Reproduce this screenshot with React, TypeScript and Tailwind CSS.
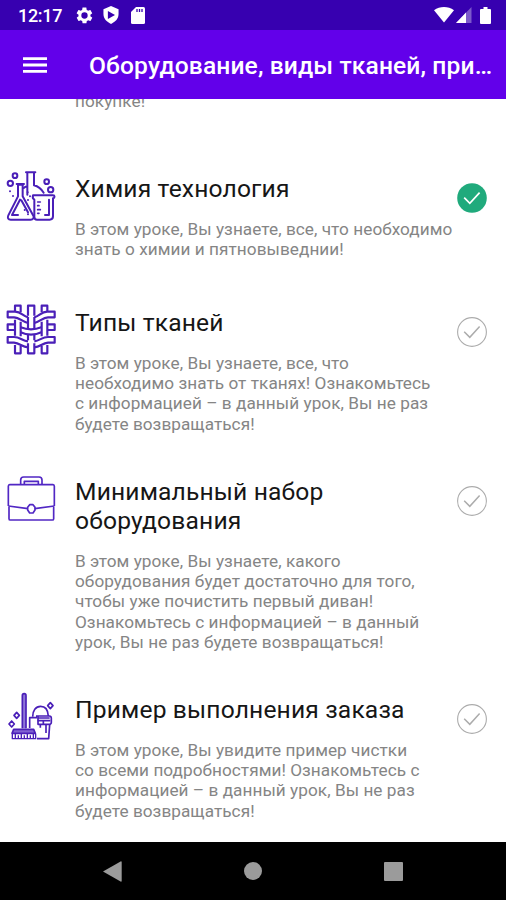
import type { ReactNode } from "react";

type Lesson = {
  title: string;
  text: string;
  done: boolean;
  icon: ReactNode;
  height: string;
};

/* ================= LESSON ICONS ================= */
function ChemistryIcon() {
  return (
    <svg
      viewBox="18 33 150 150"
      className="w-[50px] h-[50px] overflow-visible"
      fill="none"
      stroke="#4a1fb8"
      strokeWidth="6"
      strokeLinejoin="round"
      strokeLinecap="round"
    >
      <path d="M78 37h28M82 38v66M102 38v38c12 3 22 11 29 22M82 78c-4 1-8 3-11 6" />
      <path d="M50 72h22M54 73v36L25 166c-4 8 0 13 7 13h60c7 0 11-5 8-12L68 109V73" />
      <path d="M60 119l-24 46h18M64 121l20 36M54 74h14" />
      <path d="M99 106h60c6 0 6 8 0 9v54c0 6-4 10-10 10h-38c-5 0-8-4-8-9v-51c-4-2-6-6-4-13z" />
      <path d="M147 119v46h-12" />
      <path d="M113 126h8M113 137h4M113 149h8M113 160h4" strokeWidth="5" />
      <circle cx="31" cy="70" r="8" />
      <circle cx="45" cy="47" r="7" />
      <circle cx="140" cy="65" r="7" />
      <circle cx="152" cy="89" r="8" />
      <g fill="#4a1fb8" stroke="none">
        <circle cx="30" cy="94" r="3" />
        <circle cx="39" cy="108" r="3" />
        <circle cx="83" cy="97" r="3" />
        <circle cx="90" cy="109" r="3" />
        <circle cx="84" cy="120" r="3" />
        <circle cx="74" cy="150" r="3" />
        <circle cx="84" cy="163" r="3" />
      </g>
    </svg>
  );
}

function FabricIcon() {
  return (
    <svg
      viewBox="18 30 150 150"
      className="w-[50px] h-[50px] overflow-visible"
      fill="none"
      stroke="#4a1fb8"
      strokeWidth="6.5"
      strokeLinejoin="round"
    >
      <path d="M45 48V32h17v20M45 74v48M62 80v44M45 150v25h17v-22" />
      <path d="M84 62V32h19v30M84 66v36M103 66v36M84 119v17M103 119v17M84 145v30h19v-30" />
      <path d="M125 52V32h17v16M125 80v44M142 74v48M125 153v22h17v-25" />
      <path d="M45 50H23v17h19c16 0 26 14 42 17M45 50c18 0 23 12 39 17M142 50h22v17h-20c-16 0-25 14-41 17M142 50c-18 0-23 12-39 17" />
      <path d="M45 88H23v17h22M142 88h22v17h-22M62 97c10 4 16 6 31 6s21-2 31-6M62 112c10 5 16 7 31 7s21-2 31-7" />
      <path d="M42 126H23v17h19c18 1 24 14 42 14M42 126c18 0 25 11 42 13M144 126h20v17h-20c-18 1-23 14-41 14M144 126c-18 0-24 11-41 13" />
    </svg>
  );
}

function BriefcaseIcon() {
  return (
    <svg
      viewBox="18 27 150 150"
      className="w-[50px] h-[50px] overflow-visible"
      fill="none"
      stroke="#5127c4"
      strokeWidth="5"
      strokeLinejoin="round"
    >
      <path d="M62 58V45c0-6 3-9 9-9h46c6 0 9 3 9 9v13M73 58v-9h42v9" />
      <path d="M29 59h130c3 0 5 2 5 5v60H24V64c0-3 2-5 5-5z" stroke="none" />
      <path d="M25 123V64c0-3 1-5 4-5h130c3 0 4 2 4 5v59M27 125v36c0 3 1 4 4 4h126c3 0 4-1 4-4v-36" />
      <path d="M25 123l59 8M163 123l-59 8" />
      <path d="M89 119h10l6 8v8l-6 9H89l-6-9v-8z" />
    </svg>
  );
}

function CleaningIcon() {
  return (
    <svg
      viewBox="18 30 150 150"
      className="w-[50px] h-[50px] overflow-visible"
      fill="none"
      stroke="#4a1fb8"
      strokeWidth="5"
      strokeLinejoin="round"
    >
      <path d="M67 139V41c0-8 11-8 11 0v98" fill="#8f76d8" />
      <path d="M41 142h60l5 12H36z" fill="#8062d2" />
      <path d="M37 155v15h70v-15M46 156v13M55 160v10M64 156v13M73 160v10M82 156v13M91 160v10M100 156v13" strokeWidth="4" />
      <path d="M98 104c0-18 9-31 24-31 14 0 22 12 23 29" />
      <path d="M89 138v-31h22M108 102h40c5 0 6 3 6 7v12c0 4-2 6-6 6h-34v-25" />
      <path d="M113 108h36M113 116h38M121 127v10M130 116v10M138 127v26M149 128l-3 42h-35" />
      <path d="M50 91l8 9-8 9-8-9zM35 117l8 9-8 9-8-9zM151 62l8 9-8 9-8-9z" />
    </svg>
  );
}

function CheckMark({ done }: { done: boolean }) {
  return (
    <svg viewBox="0 0 30 30" className="w-[30px] h-[30px]" fill="none">
      <circle
        cx="15"
        cy="15"
        r={done ? 14.8 : 14.4}
        fill={done ? "#20aa7c" : "#ffffff"}
        stroke={done ? "none" : "#acacac"}
        strokeWidth="1.1"
      />
      <path
        d="M7.2 14.7l5.6 5.6L22.6 9.6"
        stroke={done ? "#ffffff" : "#acacac"}
        strokeWidth={done ? 1.7 : 1.5}
      />
    </svg>
  );
}

const lessons: Lesson[] = [
  {
    title: "Химия технология",
    text: "В этом уроке, Вы узнаете, все, что необходимо\nзнать о химии и пятновыведнии!",
    done: true,
    icon: <ChemistryIcon />,
    height: "h-[134px]",
  },
  {
    title: "Типы тканей",
    text: "В этом уроке, Вы узнаете, все, что\nнеобходимо знать от тканях! Ознакомьтесь\nс информацией – в данный урок, Вы не раз\nбудете возвращаться!",
    done: false,
    icon: <FabricIcon />,
    height: "h-[169px]",
  },
  {
    title: "Минимальный набор\nоборудования",
    text: "В этом уроке, Вы узнаете, какого\nоборудования будет достаточно для того,\nчтобы уже почистить первый диван!\nОзнакомьтесь с информацией – в данный\nурок, Вы не раз будете возвращаться!",
    done: false,
    icon: <BriefcaseIcon />,
    height: "h-[218px]",
  },
  {
    title: "Пример выполнения заказа",
    text: "В этом уроке, Вы увидите пример чистки\nсо всеми подробностями! Ознакомьтесь с\nинформацией – в данный урок, Вы не раз\nбудете возвращаться!",
    done: false,
    icon: <CleaningIcon />,
    height: "h-[149px]",
  },
];

function LessonRow({ lesson }: { lesson: Lesson }) {
  return (
    <div className={`flex shrink-0 items-start pl-[6px] pr-[19px] ${lesson.height}`}>
      <div className="w-[50px] shrink-0">{lesson.icon}</div>

      <div className="ml-[19px] flex-1 min-w-0 pt-[3px]">
        <h2 className="whitespace-pre text-[24.6px] leading-[29px] tracking-[0.16px] text-[#161616]">
          {lesson.title}
        </h2>
        <p className="mt-4 whitespace-pre text-[17.2px] leading-[20.2px] tracking-[0.05px] text-[#858585]">
          {lesson.text}
        </p>
      </div>

      <div className="mt-3 shrink-0">
        <CheckMark done={lesson.done} />
      </div>
    </div>
  );
}

export default function App() {
  return (
    <div className="flex h-[900px] w-[506px] flex-col overflow-hidden bg-white font-[Roboto,sans-serif]">
      {/* ================= STATUS BAR ================= */}
      <div className="flex h-[30px] shrink-0 items-center bg-[#3700b0] pl-[18px] pr-[15px] text-white">
        <span className="w-[57px] pt-[2px] text-[18px] leading-none font-medium tracking-[-0.3px]">12:17</span>

        <svg viewBox="0 0 24 24" className="w-[19px] h-[19px]" fill="currentColor">
          <path d="M19.4 13c.1-.3.1-.7.1-1s0-.7-.1-1l2.1-1.600c.2-.1.2-.4.1-.6l-2-3.500c-.1-.2-.4-.3-.6-.2l-2.500 1c-.5-.4-1.100-.7-1.700-1l-.4-2.600c0-.3-.2-.5-.5-.5h-4c-.3 0-.4.2-.5.4l-.4 2.700c-.6.2-1.100.6-1.700 1l-2.500-1c-.2-.1-.5 0-.6.2l-2 3.500c-.1.2-.1.5.1.6L4.500 11c0 .3-.1.7-.1 1s0 .7.1 1l-2.100 1.600c-.2.1-.2.400-.1.600l2 3.500c.1.2.400.3.600.2l2.500-1c.5.4 1.100.7 1.700 1l.4 2.600c0 .2.200.400.500.400h4c.3 0 .4-.2.500-.4l.4-2.600c.6-.3 1.100-.6 1.700-1l2.500 1c.2.100.5 0 .6-.2l2-3.500c.1-.2.100-.5-.1-.6zM12 16a4 4 0 110-8 4 4 0 010 8z" />
        </svg>
        <svg viewBox="0 0 18 20" className="ml-[9px] w-[16px] h-[18px]">
          <path fill="#ffffff" d="M9 0l8.500 3.500V9c0 5-3.500 9-8.500 11C4 18 .5 14 .5 9V3.500z" />
          <path fill="#3700b0" d="M5.500 5.500l8 4.500-8 4.500z" />
        </svg>
        <svg viewBox="0 0 14 17" className="ml-[12px] w-[14px] h-[17px]">
          <path fill="#ffffff" d="M5 0h7.500Q14 0 14 1.500v14Q14 17 12.500 17h-11Q0 17 0 15.500V5z" />
          <path stroke="#3700b0" strokeWidth="1.300" d="M6 2v3M8.500 2v3M11 2v3" />
        </svg>

        <div className="ml-auto flex items-center">
          <svg viewBox="0 0 20 16" className="w-[20px] h-[16px]" fill="currentColor">
            <path d="M0 3.200C6-1 14-1 20 3.200L10 15.500z" />
          </svg>
          <svg viewBox="0 0 16 16" className="ml-[2px] w-[16px] h-[16px]" fill="currentColor">
            <path d="M15.500 0v16H0z" opacity=".35" />
            <path d="M10 5.500V16H0z" />
          </svg>
          <svg viewBox="0 0 11 17" className="ml-[8px] w-[11px] h-[17px]" fill="currentColor">
            <path d="M3.500 0h4v2H10q1 0 1 1v13q0 1-1 1H1q-1 0-1-1V3q0-1 1-1h2.500z" />
          </svg>
        </div>
      </div>

      {/* ================= TOOLBAR ================= */}
      <header className="flex h-[69px] shrink-0 items-center bg-[#6200ea] pl-[23px] text-white">
        <button aria-label="Menu" className="w-[24px]">
          <svg viewBox="0 0 24 18" className="h-[18px] w-[24px]" fill="currentColor">
            <path d="M0 1.200h24v2.800H0zM0 7.600h24v2.800H0zM0 14h24v2.800H0z" />
          </svg>
        </button>
        <h1 className="ml-[42px] whitespace-nowrap pt-[2px] text-[24.6px] leading-[30px] font-medium tracking-[0.12px]">
          Оборудование, виды тканей, при…
        </h1>
      </header>

      {/* ================= LESSON LIST ================= */}
      <main className="flex h-[743px] shrink-0 flex-col overflow-hidden bg-white">
        <div className="h-[72px] shrink-0 pl-[75px]">
          <p className="-mt-[8px] text-[17.2px] leading-[20.2px] tracking-[0.05px] text-[#858585]">покупке!</p>
        </div>

        {lessons.map((lesson) => (
          <LessonRow key={lesson.title} lesson={lesson} />
        ))}
      </main>

      {/* ================= SYSTEM NAVIGATION ================= */}
      <nav className="flex h-[58px] shrink-0 items-center justify-between bg-black pl-[103px] pr-[103px]">
        <svg viewBox="0 0 19 21" className="w-[19px] h-[21px]" fill="#9b9b9b">
          <path d="M0 10.500L18 .3q.7 0 .7.7v19q0 .700-.7.700z" />
        </svg>
        <span className="h-[18px] w-[18px] rounded-full bg-[#9b9b9b]" />
        <span className="h-[19px] w-[19px] rounded-[1px] bg-[#9b9b9b]" />
      </nav>
    </div>
  );
}
